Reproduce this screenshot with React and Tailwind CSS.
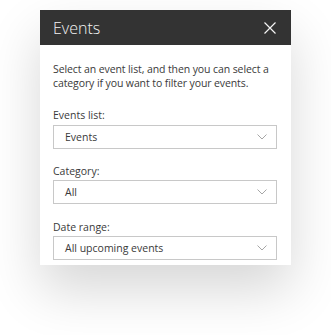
const Chevron = () => (
  <svg width="10" height="6" viewBox="0 0 10 6" fill="none" className="shrink-0">
    <path d="M0.5 0.5 L5 5 L9.5 0.5" stroke="#a6a6a6" strokeWidth="1" />
  </svg>
)

const Dropdown = ({ value }) => (
  <div className="flex h-[24px] items-center justify-between border border-[#c8c8c8] bg-white pl-[11px] pr-[9px]">
    <span className="text-[10.5px] text-[#3a3a3a]">{value}</span>
    <Chevron />
  </div>
)

const App = () => {
  return (
    <div
      className="h-[335px] w-[331px] overflow-hidden bg-white pl-[40px] pt-[10px]"
      style={{ fontFamily: '"Open Sans", "Noto Sans", sans-serif' }}
    >
      <div className="w-[251px] bg-white shadow-[0_25px_50px_rgba(0,0,0,0.16)]">
        <header className="flex h-[35px] items-center justify-between bg-[#333333] pl-[13px] pr-[15px]">
          <h1 className="text-[16px] font-light text-[#f4f4f4]">Events</h1>
          <svg width="12" height="12" viewBox="0 0 12 12" fill="none">
            <path d="M0.5 0.5 L11.5 11.5 M11.5 0.5 L0.5 11.5" stroke="#f4f4f4" strokeWidth="1.2" />
          </svg>
        </header>

        <div className="pb-[5px] pl-[13px] pr-[14px] pt-[17px] text-[10.5px] leading-[14px] text-[#3a3a3a]">
          <p className="tracking-[-0.1px]">Select an event list, and then you can select a category if you want to filter your events.</p>

          <p className="mb-[3px] mt-[18px]">Events list:</p>
          <Dropdown value="Events" />

          <p className="mb-[2px] mt-[15px]">Category:</p>
          <Dropdown value="All" />

          <p className="mb-[2px] mt-[16px]">Date range:</p>
          <Dropdown value="All upcoming events" />
        </div>
      </div>
    </div>
  )
}

export default App
